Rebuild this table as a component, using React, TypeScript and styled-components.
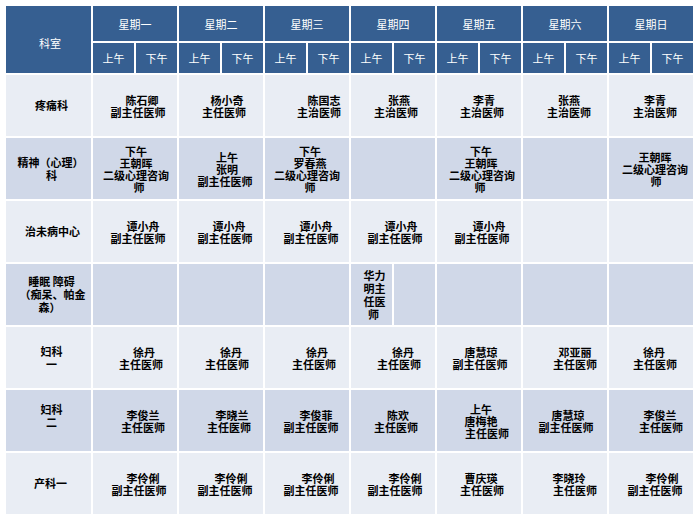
import React from "react";
import styled, { createGlobalStyle } from "styled-components";

type Slot = { t?: string[]; dx?: number[]; span?: number; lh?: number };
type Row = { label: string[]; ldx: number[]; ldy?: number; slots: Slot[] };

const days = ["星期一", "星期二", "星期三", "星期四", "星期五", "星期六", "星期日"];

const empty: Slot = {};

const rows: Row[] = [
  {
    label: ["疼痛科"],
    ldx: [3],
    slots: [
      { t: ["陈石卿", "副主任医师"], dx: [7, 3] },
      { t: ["杨小奇", "主任医师"], dx: [6, 3] },
      { t: ["陈国志", "主治医师"], dx: [17, 12] },
      { t: ["张燕", "主治医师"], dx: [6, 3] },
      { t: ["李青", "主治医师"], dx: [5, 3] },
      { t: ["张燕", "主治医师"], dx: [4, 4] },
      { t: ["李青", "主治医师"], dx: [4, 4] },
    ],
  },
  {
    label: ["精神（心理）", "科"],
    ldx: [2, 3],
    slots: [
      { t: ["下午", "王朝晖", "二级心理咨询", "师"], dx: [1, 1, 1, 4] },
      { t: ["上午", "张明", "副主任医师"], dx: [6, 6, 4] },
      { t: ["下午", "罗春燕", "二级心理咨询", "师"], dx: [3, 3, 0, 3] },
      empty,
      { t: ["下午", "王朝晖", "二级心理咨询", "师"], dx: [2, 2, 3, 1] },
      empty,
      { t: ["王朝晖", "二级心理咨询", "师"], dx: [4, 4, 5] },
    ],
  },
  {
    label: ["治未病中心"],
    ldx: [4],
    slots: [
      { t: ["谭小舟", "副主任医师"], dx: [8, 3] },
      { t: ["谭小舟", "副主任医师"], dx: [8, 4] },
      { t: ["谭小舟", "副主任医师"], dx: [9, 4] },
      { t: ["谭小舟", "副主任医师"], dx: [8, 2] },
      { t: ["谭小舟", "副主任医师"], dx: [10, 3] },
      empty,
      empty,
    ],
  },
  {
    label: ["睡眠 障碍", "（痴呆、帕金", "森）"],
    ldx: [3, 4, 1],
    slots: [
      empty,
      empty,
      empty,
      { t: ["华力", "明主", "任医", "师"], dx: [3, 3, 3, 2], span: 1, lh: 13 },
      { span: 1 },
      empty,
      empty,
      empty,
    ],
  },
  {
    label: ["妇科", "一"],
    ldx: [3, 3],
    slots: [
      { t: ["徐丹", "主任医师"], dx: [9, 6] },
      { t: ["徐丹", "主任医师"], dx: [10, 6] },
      { t: ["徐丹", "主任医师"], dx: [10, 7] },
      { t: ["徐丹", "主任医师"], dx: [10, 6] },
      { t: ["唐慧琼", "副主任医师"], dx: [2, 1] },
      { t: ["邓亚丽", "主任医师"], dx: [10, 10] },
      { t: ["徐丹", "主任医师"], dx: [3, 4] },
    ],
  },
  {
    label: ["妇科", "二"],
    ldx: [3, 3],
    ldy: 5,
    slots: [
      { t: ["李俊兰", "主任医师"], dx: [8, 8] },
      { t: ["李晓兰", "主任医师"], dx: [11, 8] },
      { t: ["李俊菲", "副主任医师"], dx: [9, 4] },
      { t: ["陈欢", "主任医师"], dx: [5, 3] },
      { t: ["上午", "唐梅艳", "主任医师"], dx: [2, 2, 8] },
      { t: ["唐慧琼", "副主任医师"], dx: [3, 1] },
      { t: ["李俊兰", "主任医师"], dx: [9, 10] },
    ],
  },
  {
    label: ["产科一"],
    ldx: [2],
    slots: [
      { t: ["李伶俐", "副主任医师"], dx: [8, 4] },
      { t: ["李伶俐", "副主任医师"], dx: [10, 4] },
      { t: ["李伶俐", "副主任医师"], dx: [11, 4] },
      { t: ["李伶俐", "副主任医师"], dx: [12, 2] },
      { t: ["曹庆瑛", "主任医师"], dx: [2, 3] },
      { t: ["李晓玲", "主任医师"], dx: [4, 10] },
      { t: ["李伶俐", "副主任医师"], dx: [11, 4] },
    ],
  },
];

export default function App() {
  return (
    <>
      <GlobalStyle />
      <Schedule>
        <Corner>科室</Corner>
        {days.map((d) => (
          <DayHead key={d}>{d}</DayHead>
        ))}
        {days.map((d) => (
          <React.Fragment key={d + "-half"}>
            <HalfHead>上午</HalfHead>
            <HalfHead>下午</HalfHead>
          </React.Fragment>
        ))}

        {rows.map((row, r) => (
          <React.Fragment key={row.label.join("")}>
            <RowLabel $band={r % 2} $dy={row.ldy ?? 0}>
              {row.label.map((l, i) => (
                <Line key={i} $dx={row.ldx[i] ?? 0}>
                  {l}
                </Line>
              ))}
            </RowLabel>
            {row.slots.map((s, i) => (
              <Cell
                key={i}
                $band={r % 2}
                $span={s.span ?? 2}
                $lh={s.lh ?? 12}
              >
                {s.t?.map((l, j) => (
                  <Line key={j} $dx={s.dx?.[j] ?? 0}>
                    {l}
                  </Line>
                ))}
              </Cell>
            ))}
          </React.Fragment>
        ))}
      </Schedule>
    </>
  );
}

const GlobalStyle = createGlobalStyle`
  html, body {
    margin: 0;
    background: #ffffff;
  }
  body {
    font-family: "Noto Sans CJK SC", "Noto Sans", sans-serif;
  }
`;

const Schedule = styled.div`
  display: grid;
  grid-template-columns: 85px repeat(14, 41px);
  grid-template-rows: 35px 30px repeat(7, 61px);
  gap: 2px;
  width: max-content;
  margin: 6px 0 0 6px;
`;

const HeadBase = styled.div`
  display: flex;
  align-items: center;
  justify-content: center;
  background: #365f91;
  color: #ffffff;
  font-size: 11px;
  line-height: 12px;
  white-space: nowrap;
`;

const Corner = styled(HeadBase)`
  grid-row: span 2;
  padding-top: 6px;
  padding-left: 3px;
`;

const DayHead = styled(HeadBase)`
  grid-column: span 2;
`;

const HalfHead = styled(HeadBase)``;

const bands = ["#e9edf4", "#d0d8e8"];

const Cell = styled.div<{ $band: number; $span: number; $lh: number }>`
  grid-column: span ${(p) => p.$span};
  display: flex;
  flex-direction: column;
  justify-content: center;
  text-align: center;
  background: ${(p) => bands[p.$band]};
  color: #000000;
  font-size: 11px;
  line-height: ${(p) => p.$lh}px;
  font-weight: 700;
`;

const RowLabel = styled.div<{ $band: number; $dy: number }>`
  display: flex;
  flex-direction: column;
  justify-content: center;
  text-align: center;
  background: ${(p) => bands[p.$band]};
  color: #000000;
  font-size: 11px;
  line-height: 13px;
  font-weight: 700;
  padding-bottom: ${(p) => p.$dy * 2}px;
`;

const Line = styled.div<{ $dx: number }>`
  padding-left: ${(p) => p.$dx * 2}px;
  white-space: nowrap;
`;
